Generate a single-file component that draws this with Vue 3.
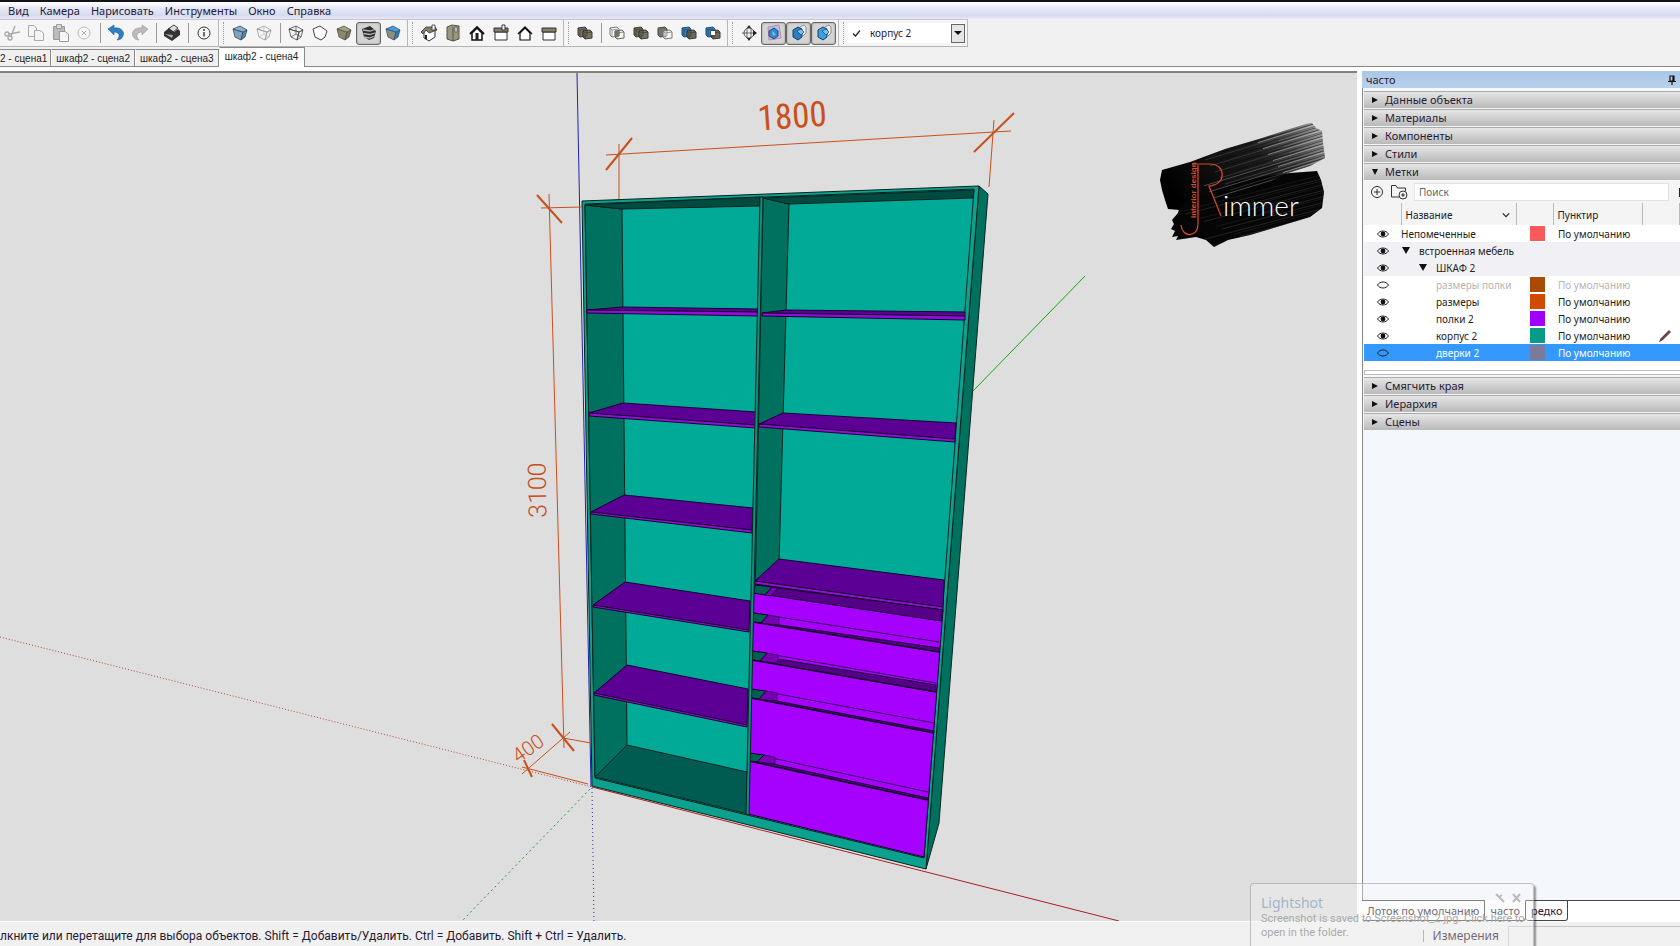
<template>
    <div class="app">
        <nav class="menubar">
            <button v-for="item in menu" :key="item" class="menu-item">{{ item }}</button>
        </nav>

        <div class="toolbar">
            <div v-for="(group, g) in toolGroups" :key="g" class="tool-group">
                <span v-if="g > 0" class="grip"></span>
                <template v-for="(tool, t) in group" :key="t">
                    <span v-if="tool === '|'" class="separator"></span>
                    <button v-else class="tool" :class="{ pressed: tool.pressed }" :aria-label="tool.icon">
                        <svg viewBox="0 0 20 20" width="20" height="20" v-html="icons[tool.icon]"></svg>
                    </button>
                </template>
            </div>
            <div class="tool-group tag-group">
                <span class="grip"></span>
                <div class="tag-select">
                    <svg class="tag-check" viewBox="0 0 10 10" width="10" height="10"><path d="M1 5.500L3.500 8L8 2.500" fill="none" stroke="#222" stroke-width="1.2" /></svg>
                    <select aria-label="Метка">
                        <option>корпус 2</option>
                    </select>
                    <span class="tag-arrow"></span>
                </div>
            </div>
        </div>

        <div class="scene-tabs">
            <button v-for="n in 4" :key="n" class="scene-tab" :class="{ active: n === 4 }">{{ n === 1 ? '2 - сцена1' : 'шкаф2 - сцена' + n }}</button>
        </div>

        <div class="main">
            <div class="viewport">
                <svg class="scene" viewBox="0 73 1357 848" preserveAspectRatio="xMinYMin slice">
                    <defs>
                        <linearGradient id="brush" x1="0" y1="0.6" x2="1" y2="0.2">
                            <stop offset="0" stop-color="#000" />
                            <stop offset="0.6" stop-color="#1c1c1c" />
                            <stop offset="0.8" stop-color="#4a4a4a" />
                            <stop offset="1" stop-color="#a8a8a8" />
                        </linearGradient>
                        <clipPath id="brush-clip"><path :d="brushTop" /></clipPath>
                        <clipPath id="brush-clip-low"><path :d="brushLow" /></clipPath>
                    </defs>

                    <!-- оси -->
                    <g fill="none">
                        <path d="M0 637L592 787" stroke="#b5442c" stroke-dasharray="1 2" />
                        <path d="M590 789L462 921" stroke="#1f9a3a" stroke-dasharray="2 3" />
                        <path d="M592 788L594 921" stroke="#2b2bb0" stroke-dasharray="1 3" />
                        <path d="M592 787L1119 921" stroke="#a82020" />
                        <path d="M973 391L1085 276" stroke="#12a812" />
                        <path d="M577 73L591 787" stroke="#2222a8" />
                    </g>

                    <!-- корпус -->
                    <g stroke="#08231f" stroke-linejoin="round">
                        <polygon points="979,186 988,194 939,823 926,869" fill="#00705f" />
                        <polygon points="582,201 979,186 926,869 592,786" fill="#0ba18e" />
                        <polygon points="585,204 974,189 924,858 595,778" fill="#00aa96" />
                        <polygon points="585,205 622,209 627,745 595,777" fill="#00705f" />
                        <polygon points="585,205 760,197 760,206 622,209" fill="#004a3f" />
                        <polygon points="763,198 789,204 778,600 751,800" fill="#00705f" />
                        <polygon points="763,198 974,190 973,198 789,204" fill="#004a3f" />
                        <polygon points="595,777 627,745 747,772 748,814" fill="#005c50" />
                    </g>

                    <!-- полки -->
                    <g stroke="#1c0033" stroke-linejoin="round">
                        <template v-for="(shelf, i) in shelves" :key="i">
                            <polygon :points="shelf.top" fill="#5c0095" />
                            <polygon :points="shelf.edge" fill="#8f0fd6" />
                        </template>
                    </g>

                    <!-- ящики -->
                    <g stroke="#1c0033" stroke-linejoin="round">
                        <polygon points="754,585 943,610 924,857 748,814" fill="#a600ff" />
                        <polygon points="755,585 943,610 941,621 754,593" fill="#560088" />
                        <polygon points="755,585 772,587 765,595 754,593" fill="#00604f" />
                        <polygon points="772,587 778,588 771,596 765,595" fill="#7700b5" />
                        <g v-for="(gap, i) in drawerGaps" :key="i">
                            <path :d="gap.back" fill="none" stroke-width="0.8" />
                            <polygon :points="gap.dark" fill="#560088" />
                            <polygon :points="gap.side" fill="#7700b5" stroke-width="0.6" />
                            <polygon :points="gap.wall" fill="#00604f" />
                            <path :d="gap.front" fill="none" stroke-width="1.6" />
                        </g>
                    </g>
                    <polygon points="760,197 763,197 749,815 746,814" fill="#0f8f7e" stroke="#08231f" />

                    <!-- размеры -->
                    <g fill="none" stroke="#c8501c">
                        <path d="M606 155L1011 131M619 144V199M994 120L989 187" />
                        <path d="M549 194L564 748M541 208L582 207M563 738L591 743" />
                        <path d="M570 732L522 774M522 767L588 784" />
                        <path d="M606 170L632 138M974 152L1014 113M537 195L562 223M552 724L574 751M524 760L532 777" stroke-width="2" />
                    </g>
                    <g fill="#c8501c" text-anchor="middle">
                        <text class="dim-large" transform="translate(793 128) rotate(-4)">1800</text>
                        <text class="dim-medium" transform="translate(546 490) rotate(-91)">3100</text>
                        <text class="dim-small" transform="translate(532 754) rotate(-35)">400</text>
                    </g>

                    <!-- логотип -->
                    <path :d="brushTop" fill="url(#brush)" />
                    <path :d="brushLow" fill="#050505" />
                    <g clip-path="url(#brush-clip)">
                        <path v-for="(s, i) in streaks" :key="i" :d="s.d" :stroke="s.color" fill="none" stroke-width="0.6" />
                    </g>
                    <g clip-path="url(#brush-clip-low)">
                        <path v-for="(s, i) in lowStreaks" :key="i" :d="s.d" :stroke="s.color" fill="none" stroke-width="0.5" />
                    </g>
                    <path d="M1192 164H1210C1226 164 1227 185 1209 186L1221 216M1198 165V224C1198 238 1182 238 1181 225" fill="none" stroke="#dd4a2a" stroke-width="1.2" />
                    <text class="logo-side" transform="translate(1196 218) rotate(-90)">interior design</text>
                    <text class="logo-name" x="1223" y="216">immer</text>
                </svg>
            </div>

            <aside class="tray">
                <header class="tray-title">
                    <span>часто</span>
                    <svg viewBox="0 0 10 10" width="10" height="10"><path d="M3 1H7V6H3ZM6 1V6M1 6.5H9M5 7V10" fill="none" stroke="#111" stroke-width="1.2" /></svg>
                </header>
                <div class="tray-body">
                    <button v-for="name in topPanels" :key="name" class="panel-head">
                        <span class="tri" :class="{ open: name === 'Метки' }"></span>{{ name }}
                    </button>

                    <div class="tag-tools">
                        <button aria-label="Добавить метку">
                            <svg viewBox="0 0 14 14" width="14" height="14"><path d="M7 4V10M4 7H10" stroke="#333" /><circle cx="7" cy="7" r="5.5" fill="none" stroke="#333" /></svg>
                        </button>
                        <button aria-label="Добавить папку">
                            <svg viewBox="0 0 18 16" width="18" height="16"><path d="M9 13H1.5V1.5H6L7.500 4H15.500V7" fill="none" stroke="#333" /><circle cx="13" cy="11" r="4" fill="#f4f4f4" stroke="#333" /><path d="M13 9V13M11 11H15" stroke="#333" /></svg>
                        </button>
                        <input type="text" placeholder="Поиск" aria-label="Поиск">
                        <span class="more"></span>
                    </div>

                    <table class="tags">
                        <colgroup>
                            <col class="c-eye"><col class="c-name"><col class="c-color"><col class="c-dash"><col class="c-edit">
                        </colgroup>
                        <thead>
                            <tr>
                                <th></th>
                                <th>
                                    <div class="th-name">Название<svg viewBox="0 0 10 6" width="8" height="6"><path d="M1 1L5 5L9 1" fill="none" stroke="#222" stroke-width="1.4" /></svg></div>
                                </th>
                                <th></th>
                                <th>Пунктир</th>
                                <th></th>
                            </tr>
                        </thead>
                        <tbody>
                            <tr v-for="tag in tags" :key="tag.name" :class="{ folder: tag.folder, hidden: tag.hidden, selected: tag.selected }">
                                <td class="eye">
                                    <svg viewBox="0 0 12 8" width="12" height="8">
                                        <path d="M0.500 4C3 0 9 0 11.500 4C9 8 3 8 0.500 4Z" fill="none" stroke="#222" />
                                        <circle v-if="tag.visible" cx="6" cy="4" r="2.4" fill="#111" />
                                    </svg>
                                </td>
                                <td>
                                    <div class="tag-name" :class="'level-' + tag.level">
                                        <span v-if="tag.folder" class="tri open"></span>{{ tag.name }}
                                    </div>
                                </td>
                                <td><span v-if="tag.color" class="swatch" :style="{ background: tag.color }"></span></td>
                                <td class="dash">{{ tag.folder ? '' : 'По умолчанию' }}</td>
                                <td class="edit">
                                    <svg v-if="tag.current" viewBox="0 0 12 12" width="12" height="12"><path d="M0.500 11.500L2 8.500L10 0.500L11.500 2L3.500 10Z" fill="#7a3a3a" stroke="#3a2a2a" stroke-width="0.6" /></svg>
                                </td>
                            </tr>
                        </tbody>
                    </table>
                    <div class="splitter"></div>

                    <button v-for="name in bottomPanels" :key="name" class="panel-head">
                        <span class="tri"></span>{{ name }}
                    </button>
                </div>
                <div class="tray-tabs">
                    <button class="tray-tab">Лоток по умолчанию</button>
                    <button class="tray-tab current">часто</button>
                    <button class="tray-tab">редко</button>
                    <span class="tray-rest"></span>
                </div>
            </aside>
        </div>

        <footer class="statusbar">
            <span class="hint">лкните или перетащите для выбора объектов. Shift = Добавить/Удалить. Ctrl = Добавить. Shift + Ctrl = Удалить.</span>
            <label class="measure-label" for="measure">Измерения</label>
            <input id="measure" class="measure" type="text">
        </footer>

        <div class="toast">
            <div class="toast-head">
                <span>Lightshot</span>
                <svg viewBox="0 0 28 10" width="28" height="10"><path d="M2 1L5 4L8 2M5 4L10 9M19 1L26 9M26 1L19 9" fill="none" stroke="#bbb" stroke-width="2" /></svg>
            </div>
            <p>Screenshot is saved to Screenshot_2.jpg. Click here to open in the folder.</p>
        </div>
    </div>
</template>

<script setup>
const menu = ['Вид', 'Камера', 'Нарисовать', 'Инструменты', 'Окно', 'Справка']
const topPanels = ['Данные объекта', 'Материалы', 'Компоненты', 'Стили', 'Метки']
const bottomPanels = ['Смягчить края', 'Иерархия', 'Сцены']

const tool = (icon, pressed = false) => ({ icon, pressed })

const toolGroups = [
    [tool('cut'), tool('copy'), tool('paste'), tool('erase'), '|', tool('undo'), tool('redo'), '|', tool('print'), '|', tool('info')],
    [tool('xray'), tool('backEdges'), '|', tool('wire'), tool('hiddenLine'), tool('shaded'), tool('textured', true), tool('mono')],
    [tool('iso'), tool('top'), tool('front'), tool('right'), tool('back'), tool('left')],
    [tool('shell'), '|', tool('intersect'), tool('union'), tool('subtract'), tool('trim'), tool('split')],
    [tool('section'), tool('planes', true), tool('cuts', true), tool('fill', true)]
]

// куб: передняя, верхняя и боковая грани
const cube = (front, top, side, stroke) => `
    <g stroke="${stroke}" stroke-width="0.8" stroke-linejoin="round">
        <path d="M3 6L13 9L11 17L5 14Z" fill="${front}"/>
        <path d="M13 9L17 7L15 14L11 17Z" fill="${side}"/>
        <path d="M3 6L10 3L17 7L13 9Z" fill="${top}"/>
    </g>`

const solid = (a, b, lineA = '#3c3a34', lineB = '#3c3a34') => `
    <g stroke-width="1" stroke-linejoin="round">
        <path d="M3 5L10 4L12 6V13L5 14L3 12Z" fill="${a}" stroke="${lineA}"/>
        <path d="M8 8L15 7L17 9V15L10 16L8 14Z" fill="${b}" stroke="${lineB}"/>
        <path d="M8 8L12 7.500V13L8 13.500ZM8 8L10 10L17 9M10 10V16M3 5L5 7L11 6M5 7V13" fill="none" stroke="${lineB}" stroke-width="0.7"/>
    </g>`

const cutBox = (fill) => `
    <path d="M11 4L15 2L17 4V10L14 13" fill="#eee" stroke="#777" stroke-width="0.8"/>
    <path d="M4 7L9 4L13 6V14L9 17L4 14Z" fill="${fill}" stroke="#1b3f60"/>
    <path d="M8 8L12 6L15 9L12 12Z" fill="#7fc0e8" stroke="#1b3f60" stroke-width="0.7"/>`

const icons = {
    cut: '<g fill="none" stroke="#aaa" stroke-width="1.4"><path d="M18 9L7 11M13 3L9 13"/><circle cx="5" cy="11" r="2"/><circle cx="8" cy="15" r="2"/></g>',
    copy: '<g fill="#f5f5f5" stroke="#aaa"><path d="M2.500 2.500H8L10.500 5V13.500H2.500Z"/><path d="M8.500 7.500H14L17.500 10V17.500H8.500Z"/></g>',
    paste: '<g stroke="#999"><path d="M3.500 3.500H14.500V16.500H3.500Z" fill="#bbb"/><path d="M6.500 1.500H11.500V5.500H6.500Z" fill="#ddd"/><path d="M9.500 8.500H15L18.500 11V18.500H9.500Z" fill="#f5f5f5"/></g>',
    erase: '<circle cx="10" cy="10" r="6" fill="none" stroke="#bbb"/><path d="M8 8L12 12M12 8L8 12" stroke="#aaa"/>',
    undo: '<path d="M2 6L8 2V5C15 4 19 9 17 13C16 16 13 17 11 17C15 13 13 9 8 9V12Z" fill="#2f7fc4" stroke="#1f5c94" stroke-width="0.6"/>',
    redo: '<path d="M18 6L12 2V5C5 4 1 9 3 13C4 16 7 17 9 17C5 13 7 9 12 9V12Z" fill="#bbb" stroke="#999" stroke-width="0.6"/>',
    print: '<path d="M6 6L12 2L16 5L11 9Z" fill="#ddd" stroke="#444"/><path d="M2 9L7 5L12 9L16 6L18 8V12L10 18L2 13Z" fill="#333"/><path d="M3 11L10 15L11 12Z" fill="#aaa"/>',
    info: '<circle cx="10" cy="10" r="6" fill="none" stroke="#333"/><path d="M10 9V13.500" stroke="#222" stroke-width="1.3"/><circle cx="10" cy="7" r="0.9" fill="#222"/>',
    xray: cube('#7fa3bf', '#8fb0c8', '#5f88a8', '#2f4a60'),
    backEdges: cube('none', 'none', 'none', '#999') + '<path d="M5 14L10 11L15 14M10 11V3" fill="none" stroke="#bbb" stroke-width="0.7"/>',
    wire: cube('none', 'none', 'none', '#444') + '<path d="M5 14L10 11L15 14M10 11V3" fill="none" stroke="#444" stroke-width="0.7"/>',
    hiddenLine: '<path d="M3 6L10 3L17 8L15 14L11 17L5 14Z" fill="#fff" stroke="#444" stroke-linejoin="round"/>',
    shaded: cube('#8a876f', '#a5a28a', '#7c795f', '#56543f'),
    textured: '<path d="M3 6L11 3L17 8L15 15L10 17L5 14Z" fill="#2c2c2c"/><path d="M4 7L11 8L16 6.500M4.500 10.500L11 11.500L16 10M5 14L10 15L15 13.500" fill="none" stroke="#b5b5a8" stroke-width="1.3"/>',
    mono: cube('#8f8e7c', '#3d9fe0', '#2680c4', '#3c5468'),
    iso: '<path d="M5 9V15L10 18L16 14V7" fill="#fff" stroke="#333"/><path d="M2 9L7 4L16 4L18 7L10 10L7 7L4 11Z" fill="#827f68" stroke="#333" stroke-width="0.8"/><path d="M7 12V16" stroke="#222" stroke-width="2"/><path d="M13 2H16V7H13Z" fill="#fff" stroke="#333" stroke-width="0.8"/>',
    top: '<path d="M4 4L9 2L16 3V16L10 18L4 16Z" fill="#9a9780" stroke="#56543f"/><path d="M10 4V18" stroke="#56543f"/><path d="M12 4H14V9H12Z" fill="#fff" stroke="#444" stroke-width="0.7"/>',
    front: '<path d="M5 10V17H15V10L10 5Z" fill="#fff" stroke="#111" stroke-width="1.5"/><path d="M3 11L10 4L17 11" fill="none" stroke="#111" stroke-width="1.8"/><path d="M8.500 10H11.500V17H8.500Z" fill="#222"/>',
    right: '<path d="M4 9H16V17H4Z" fill="#fff" stroke="#333"/><path d="M3 5H17V9H3Z" fill="#827f68" stroke="#333"/><path d="M11 2H14V7H11Z" fill="#fff" stroke="#333"/>',
    back: '<path d="M5 10V17H15V10L10 5Z" fill="#fff" stroke="#111" stroke-width="1.2"/><path d="M3 11L10 4L17 11" fill="none" stroke="#111" stroke-width="1.5"/>',
    left: '<path d="M4 9H16V17H4Z" fill="#fff" stroke="#333"/><path d="M3 5H17V9H3Z" fill="#827f68" stroke="#333"/>',
    shell: solid('#77745f', '#77745f'),
    intersect: solid('#fff', 'none', '#777', '#666') + '<path d="M8 8H12V13H8Z" fill="#77745f"/>',
    union: solid('#6d6a58', '#77745f'),
    subtract: solid('#77745f', '#f3f3f3', '#444', '#777'),
    trim: solid('#2f80c8', '#6d6a58', '#174c80'),
    split: solid('#2f80c8', '#6d6a58', '#174c80') + '<path d="M8 8H12V12H8Z" fill="#fff"/>',
    section: '<circle cx="10" cy="10" r="5" fill="none" stroke="#333" stroke-width="0.8"/><path d="M3 10H17M8 5V15M12 5V15" stroke="#333" stroke-width="0.7"/><path d="M10 2L12 5H8ZM10 18L12 15H8ZM18 10L14 7V13Z" fill="#222"/>',
    planes: '<path d="M4 4L15 2L17 15L5 17Z" fill="#a9c4ea" stroke="#d070a0" stroke-width="0.8"/><path d="M5 8L10 5L14 8V13L10 16L5 13Z" fill="#3c86c8" stroke="#1b4f80"/><path d="M8 8L12 11L9 13Z" fill="#7fb8e0"/>',
    cuts: cutBox('#2a7fc4'),
    fill: cutBox('#3aa0e6')
}

const tags = [
    { name: 'Непомеченные', level: 0, color: '#fb5a5a', visible: true },
    { name: 'встроенная мебель', level: 1, folder: true, visible: true },
    { name: 'ШКАФ 2', level: 2, folder: true, visible: true },
    { name: 'размеры полки', level: 3, color: '#a94a05', hidden: true },
    { name: 'размеры', level: 3, color: '#d04a02', visible: true },
    { name: 'полки 2', level: 3, color: '#a000fa', visible: true },
    { name: 'корпус 2', level: 3, color: '#089c88', visible: true, current: true },
    { name: 'дверки 2', level: 3, color: '#7a7a9c', selected: true }
]

const shelves = [
    { top: '587,310 622,307 758,309 758,312', edge: '587,310 758,312 758,316 587,313' },
    { top: '589,413 623,403 756,412 756,425', edge: '589,413 756,425 756,428 589,416' },
    { top: '591,512 624,495 753,508 752,530', edge: '591,512 752,530 752,533 591,514' },
    { top: '593,605 625,582 750,601 749,630', edge: '593,605 749,630 749,632 593,607' },
    { top: '594,693 627,665 748,689 747,725', edge: '594,693 747,725 747,727 594,695' },
    { top: '762,313 786,310 965,312 965,316', edge: '762,313 965,316 965,320 762,316' },
    { top: '759,424 783,413 956,423 955,439', edge: '759,424 955,439 955,442 759,427' },
    { top: '755,581 779,559 944,580 943,607', edge: '755,581 943,607 943,610 755,584' }
]

// щели между фасадами: x слева, края щели слева, x справа, края щели справа, толщина тени
const drawerGaps = [
    [753, 613, 622, 939, 642, 652, 4],
    [752, 651, 660, 936, 683, 692, 7],
    [751, 689, 698, 934, 723, 733, 2],
    [749, 753, 761, 928, 792, 800, 2]
].map(([l, lt, lb, r, rt, rb, shade]) => ({
    back: `M${l} ${lt}L${r} ${rt}`,
    dark: `${l + 20},${lb + 2 - (shade > 5 ? 4 : 0)} ${r},${rb - shade} ${r},${rb} ${l},${lb}`,
    side: `${l + 15},${lt + 2} ${l + 26},${lt + 4} ${l + 26},${lb + 3} ${l + 8},${lb + 1}`,
    wall: `${l},${lt} ${l + 15},${lt + 2} ${l + 8},${lb + 1} ${l},${lb}`,
    front: `M${l} ${lb}L${r} ${rb}`
}))

const brushTop = 'M1162 170L1190 162L1225 149L1262 138L1290 129L1306 124L1312 123L1316 128L1322 131L1323 143L1325 158L1310 166L1288 173L1230 200L1180 210L1168 209L1165 200L1162 190L1160 180Z'
const brushLow = 'M1180 205L1240 180L1290 173L1317 171L1321 180L1324 192L1322 208L1310 217L1280 226L1250 235L1228 240L1214 247L1206 240L1196 237L1176 240L1178 236L1172 237L1175 231L1171 229L1174 224L1172 220L1178 213Z'

const streaks = Array.from({ length: 34 }, (_, i) => {
    const start = 1200 + (i * 37) % 90
    const y = 166 + i * 1.5
    return {
        d: `M${start} ${y - (start - 1160) * 0.3}L1325 ${y - 50}`,
        color: ['#4a4a4a', '#1a1a1a', '#777', '#0a0a0a', '#b8b8b8'][i % 5]
    }
})

const lowStreaks = Array.from({ length: 24 }, (_, i) => {
    const start = 1180 + (i * 53) % 100
    const y = 214 + i * 2
    return {
        d: `M${start} ${y - (start - 1170) * 0.25}L1325 ${y - 40}`,
        color: ['#2a2a2a', '#111', '#444'][i % 3]
    }
})
</script>

<style>
body {
    margin: 0;
}
</style>

<style scoped>
.app {
    position: relative;
    display: flex;
    flex-direction: column;
    height: 100vh;
    overflow: hidden;
    background: #f0f0f0;
    color: #2a1a33;
    font-family: "Noto Sans", "Open Sans", sans-serif;
    font-size: 11px;
}

button,
input,
select {
    font: inherit;
    color: inherit;
}

button {
    padding: 0;
    border: none;
    background: none;
}

/* меню */
.menubar {
    display: flex;
    gap: 11px;
    height: 17px;
    padding-left: 8px;
    border-top: 2px solid #14121a;
    background: linear-gradient(#fff, #e4e8f6 40%, #d5dbf0 80%, #e6e9f5);
}

.menu-item {
    line-height: 16px;
}

/* панель инструментов */
.toolbar {
    display: flex;
    height: 28px;
    background: #f0f0f0;
}

.tool-group {
    display: flex;
    align-items: center;
    padding-right: 2px;
    border-top: 1px solid #c8c8c8;
    border-right: 1px solid #b8b8b8;
    border-bottom: 1px solid #b4b4b4;
    background: #f5f5f5;
}

.grip {
    width: 1px;
    height: 22px;
    margin: 0 4px;
    border-left: 1px dotted #999;
    box-sizing: border-box;
}

.separator {
    width: 1px;
    height: 20px;
    margin: 0 3px 0 4px;
    background: #999;
}

.tool {
    display: flex;
    align-items: center;
    justify-content: center;
    width: 24px;
    height: 23px;
    box-sizing: border-box;
}

.tool.pressed {
    width: 25px;
    border: 1px solid #666;
    border-radius: 3px;
    background: #d4d4d4;
    box-shadow: inset 0 0 2px #888;
}

.tag-select {
    display: flex;
    align-items: center;
    width: 117px;
    height: 20px;
    padding-left: 4px;
    box-sizing: border-box;
    background: #fff;
}

.tag-select select {
    flex: 1;
    min-width: 0;
    padding: 0 0 0 8px;
    border: none;
    background: none;
    appearance: none;
    font-size: 10px;
}

.tag-arrow {
    display: flex;
    align-items: center;
    justify-content: center;
    width: 12px;
    height: 17px;
    border: 1px solid #666;
    background: #e6e6e6;
}

.tag-arrow::before {
    content: "";
    border: 4px solid transparent;
    border-top: 4px solid #111;
    border-bottom: none;
}

/* вкладки сцен */
.scene-tabs {
    display: flex;
    align-items: flex-end;
    height: 19px;
    border-bottom: 1px solid #888;
    font-family: "Liberation Sans", Arial, sans-serif;
    font-size: 10px;
}

.scene-tab {
    height: 17px;
    padding: 0 4px;
    border: 1px solid #888;
    border-left: 1px solid #fff;
    border-bottom: none;
    color: #222;
}

.scene-tab:first-child {
    padding: 0 3px 0 0;
    border-left: none;
}

.scene-tab.active {
    height: 20px;
    margin-bottom: -1px;
    padding: 0 6px 3px 5px;
    background: #fff;
}

/* рабочая область */
.main {
    display: flex;
    flex: 1;
    min-height: 0;
    padding-top: 4px;
    background: #fff;
}

.viewport {
    flex: 1;
    min-width: 0;
    border-top: 2px solid #7d857d;
    background: #dedede;
}

.scene {
    display: block;
    width: 100%;
    height: 100%;
}

.dim-large {
    font-family: "Roboto Condensed", Roboto, sans-serif;
    font-size: 35px;
}

.dim-medium {
    font-family: Roboto, sans-serif;
    font-size: 25px;
    font-weight: 300;
}

.dim-small {
    font-family: Roboto, sans-serif;
    font-size: 20px;
    font-weight: 300;
}

.logo-side {
    fill: #dd4a2a;
    font-family: "Liberation Sans", sans-serif;
    font-size: 8px;
    font-weight: bold;
}

.logo-name {
    fill: #fff;
    font-family: Lato, sans-serif;
    font-size: 28px;
    font-weight: 300;
}

/* лоток */
.tray {
    display: flex;
    flex-direction: column;
    width: 318px;
    margin-left: 5px;
}

.tray-title {
    display: flex;
    align-items: center;
    justify-content: space-between;
    height: 17px;
    padding: 0 3px 0 4px;
    background: linear-gradient(#a9c6e6, #b9d0ea);
}

.tray-body {
    flex: 1;
    display: flex;
    flex-direction: column;
    min-height: 0;
    padding: 3px 0 0 1px;
    border-left: 1px solid #888;
    background: #f4f8fd;
}

.panel-head {
    display: flex;
    flex: none;
    align-items: center;
    height: 17px;
    margin-bottom: 1px;
    padding-left: 8px;
    border-top: 1px solid #aaa;
    box-sizing: border-box;
    background: linear-gradient(#e6e6e6, #b9b9b9);
    line-height: 16px;
}

.tri {
    width: 0;
    height: 0;
    margin-right: 7px;
    border: 3px solid transparent;
    border-left: 6px solid #111;
    border-right: none;
}

.tri.open {
    border: 3px solid transparent;
    border-top: 6px solid #111;
    border-bottom: none;
}

.tag-tools {
    display: flex;
    flex: none;
    align-items: center;
    height: 22px;
    padding-left: 6px;
    gap: 6px;
    background: #f4f4f5;
    font-size: 10px;
}

.tag-tools button {
    display: flex;
}

.tag-tools input {
    flex: 1;
    height: 18px;
    padding: 0 4px;
    border: 1px solid #e2e2e2;
    box-sizing: border-box;
    background: #fff;
}

.tag-tools input::placeholder {
    color: #666;
    opacity: 1;
}

.more {
    width: 1px;
    height: 9px;
    margin-left: 4px;
    background: #222;
}

.tags {
    width: 100%;
    border-collapse: collapse;
    table-layout: fixed;
    border-bottom: 9px solid #fff;
    background: #fff;
    color: #222;
    font-size: 10px;
}

.c-eye { width: 37px; }
.c-name { width: 115px; }
.c-color { width: 37px; }
.c-dash { width: 89px; }

.tags th {
    height: 20px;
    padding: 2px 0 0 4px;
    border-right: 1px solid #bbb;
    background: #f4f4f5;
    font-weight: normal;
    text-align: left;
    line-height: 16px;
}

.th-name {
    display: flex;
    align-items: center;
    justify-content: space-between;
    padding-right: 6px;
}

.tags td {
    height: 17px;
    padding: 0;
    line-height: 16px;
    white-space: nowrap;
}

.tags td svg {
    display: block;
}

.tags .eye svg {
    margin: 0 auto;
}

.tag-name {
    display: flex;
    align-items: center;
}

.tag-name .tri.open {
    margin-right: 9px;
    border: 4px solid transparent;
    border-top: 7px solid #111;
    border-bottom: none;
}

.level-1 { padding-left: 1px; }
.level-2 { padding-left: 18px; }
.level-3 { padding-left: 35px; }

.swatch {
    display: block;
    width: 15px;
    height: 15px;
    margin-left: 14px;
}

.tags .dash {
    padding-left: 5px;
}

.tags .edit {
    padding-left: 17px;
}

.folder {
    background: #f1f1f5;
}

.hidden {
    color: #b5b5b5;
}

.selected {
    background: #3399ff;
    color: #fff;
}

.splitter {
    flex: none;
    height: 3px;
    margin-bottom: 2px;
    border: 1px solid #bbb;
    border-right: none;
    background: #fff;
}

.tray-tabs {
    display: flex;
    height: 21px;
}

.tray-tab {
    padding: 0 5px;
    border: 1px solid #444;
    border-left: none;
    border-radius: 0 0 3px 3px;
}

.tray-tab.current {
    border-top-color: transparent;
}

.tray-rest {
    flex: 1;
    border-top: 1px solid #444;
}

/* строка состояния */
.statusbar {
    display: flex;
    flex: none;
    align-items: center;
    height: 24px;
    border-top: 1px solid #fff;
    background: #f0f0f0;
    font-size: 12px;
}

.hint {
    flex: 1;
    padding-top: 3px;
    font-family: Roboto, "Noto Sans", sans-serif;
    white-space: nowrap;
}

.measure-label {
    margin-top: 4px;
    padding: 0 9px;
    border-left: 1px solid #999;
    line-height: 12px;
}

.measure {
    align-self: flex-end;
    width: 172px;
    height: 20px;
    padding: 0;
    border: 1px solid #c5c5cc;
    border-right: none;
    border-bottom: none;
    box-sizing: border-box;
    background: #f0f0f0;
}

/* всплывающее уведомление */
.toast {
    position: absolute;
    right: 146px;
    bottom: 0;
    width: 284px;
    height: 63px;
    padding: 9px 5px 0 10px;
    border: 1px solid rgba(140, 140, 140, 0.5);
    border-bottom: none;
    border-radius: 4px 4px 0 0;
    box-sizing: border-box;
    background: rgba(245, 245, 245, 0.35);
    box-shadow: 2px 2px 2px rgba(0, 0, 0, 0.4);
    color: #aaa;
}

.toast-head {
    display: flex;
    justify-content: space-between;
    padding-right: 6px;
    color: #a4b4c8;
    font-size: 14px;
    line-height: 19px;
}

.toast p {
    margin: 0;
    font-family: Roboto, "Noto Sans", sans-serif;
    font-size: 11px;
    line-height: 14px;
}
</style>
